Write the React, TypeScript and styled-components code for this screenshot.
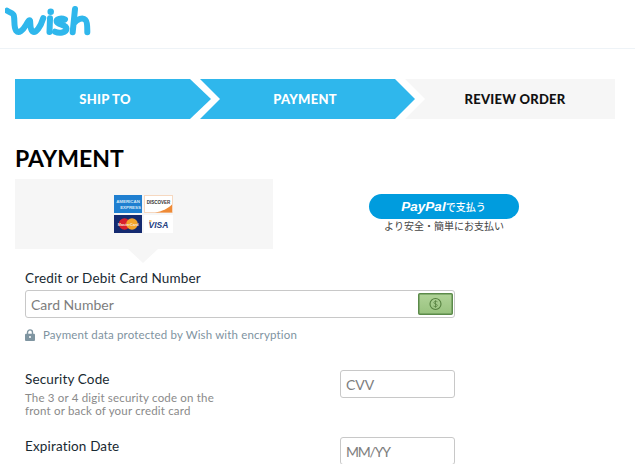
import React from "react";
import styled, { createGlobalStyle } from "styled-components";

const Global = createGlobalStyle`
  html, body { margin: 0; padding: 0; background: #fff; }
  body { font-family: Lato, "Liberation Sans", sans-serif; color: #192a32; }
  * { box-sizing: border-box; }
`;

const Page = styled.div`
  width: 635px;
  height: 464px;
  overflow: hidden;
`;

const Header = styled.header`
  height: 49px;
  border-bottom: 1px solid #eef3f7;
  padding: 6px 0 0 5px;
`;

const Main = styled.main`
  padding: 30px 20px 0 15px;
`;

const Stepper = styled.div`
  display: flex;
  height: 40px;
`;

const Step = styled.div<{ $kind: "first" | "middle" | "last"; $active: boolean }>`
  display: flex;
  align-items: center;
  justify-content: center;
  height: 40px;
  font-size: 13px;
  font-weight: 900;
  letter-spacing: 0.25px;
  background: ${(p) => (p.$active ? "#2fb7ec" : "#f6f6f6")};
  color: ${(p) => (p.$active ? "#fff" : "#111")};
  ${(p) =>
    p.$kind === "first" &&
    `width: 196px; padding-right: 16px; clip-path: polygon(0 0, 175px 0, 196px 20px, 175px 40px, 0 40px);`}
  ${(p) =>
    p.$kind === "middle" &&
    `width: 215px; margin-left: -11px; padding-right: 5px; clip-path: polygon(0 0, 195px 0, 215px 20px, 195px 40px, 0 40px, 20px 20px);`}
  ${(p) =>
    p.$kind === "last" &&
    `width: 210px; margin-left: -10px; padding-left: 10px; clip-path: polygon(0 0, 210px 0, 210px 40px, 0 40px, 20px 20px);`}
`;

const Title = styled.h1`
  margin: 26px 0 0;
  font-size: 23px;
  line-height: 26px;
  font-weight: 700;
  color: #000;
`;

const Tabs = styled.div`
  display: flex;
  margin-top: 8px;
  height: 70px;
`;

const CardTab = styled.div`
  position: relative;
  width: 258px;
  background: #f6f6f6;
  display: flex;
  justify-content: center;
  padding: 16px 1px 0 0;
  &::after {
    content: "";
    position: absolute;
    left: 113px;
    top: 70px;
    border-left: 15px solid transparent;
    border-right: 15px solid transparent;
    border-top: 14px solid #f6f6f6;
  }
`;

const CardGrid = styled.div`
  display: grid;
  grid-template-columns: 28px 29px;
  grid-auto-rows: 18px;
  gap: 2px;
`;

const PayTab = styled.div`
  width: 342px;
  display: flex;
  flex-direction: column;
  align-items: center;
  padding-top: 15px;
`;

const PayPalButton = styled.button`
  width: 150px;
  height: 25px;
  border: 0;
  padding: 0 1px 0 0;
  border-radius: 13px;
  background: #009cde;
  color: #fff;
  display: flex;
  align-items: center;
  justify-content: center;
  font-family: "Noto Sans CJK JP", sans-serif;
  font-size: 10px;
  font-weight: 500;
`;

const PayPalWord = styled.span`
  font-family: "Liberation Sans", sans-serif;
  font-style: italic;
  font-weight: 700;
  font-size: 13.5px;
`;

const PayCaption = styled.div`
  font-family: "Noto Sans CJK JP", sans-serif;
  font-size: 10px;
  line-height: 14px;
  color: #444;
`;

const Form = styled.form`
  padding: 20px 0 0 10px;
  width: 440px;
`;

const Label = styled.div`
  font-size: 13.5px;
  line-height: 18px;
  letter-spacing: 0.15px;
  color: #192a32;
`;

const InputWrap = styled.div`
  position: relative;
  margin-top: 3px;
`;

const TextInput = styled.input<{ $width: number; $tight?: boolean }>`
  display: block;
  width: ${(p) => p.$width}px;
  height: 28px;
  border: 1px solid #c8c8c8;
  border-radius: 3px;
  padding: 0 5px;
  background: #fff;
  font-family: Lato, sans-serif;
  font-size: 14px;
  letter-spacing: ${(p) => (p.$tight ? "-1.2px" : "0")};
  &::placeholder { color: #7d7d7d; opacity: 1; }
`;

const CashBadge = styled.div`
  position: absolute;
  right: 2px;
  top: 3px;
  width: 35px;
  height: 22px;
`;

const Secure = styled.div`
  display: flex;
  align-items: center;
  gap: 8px;
  margin-top: 9px;
  font-size: 11.5px;
  line-height: 16px;
  letter-spacing: 0.15px;
  color: #80939f;
`;

const FieldRow = styled.div<{ $top: number }>`
  display: flex;
  justify-content: space-between;
  align-items: flex-start;
  margin-top: ${(p) => p.$top}px;
`;

const Help = styled.div`
  margin-top: 3px;
  font-size: 11.5px;
  line-height: 13px;
  letter-spacing: 0.18px;
  color: #8a8a8a;
`;

const FieldText = styled.div``;

const Logo = () => (
  <svg width="90" height="32" viewBox="0 0 90 32" fill="none" stroke="#2fb7ec" strokeWidth="6" strokeLinecap="round" strokeLinejoin="round">
    <path d="M2 4.700 C5 7 8 6.500 8.800 9.500 C10 14 8.500 21 11 24.500 C14 28 18 24 21 19 C23 15.500 24.500 13.500 25 14.500 C25.500 18 25 23.500 27.500 25.500 C31 27.500 35.500 21 38.300 12" />
    <path d="M45 12.300 L44.500 26" />
    <path d="M45.700 5.700 L45.700 5.800" strokeWidth="6.500" />
    <path d="M60 13.500 C56 11.500 51 13 51.700 15.700 C52.500 19 61.500 18.500 61.500 22.500 C61.500 27 54 27.500 50 25.700" />
    <path d="M70 3 L67.700 26.300 M69 17.300 C72 13 78 11 80.500 14 C82.500 16 82.300 21 82.300 26.300" />
  </svg>
);

const Amex = () => (
  <svg width="28" height="18" viewBox="0 0 28 18">
    <rect width="28" height="18" fill="#1f7fd0" />
    <text x="14" y="7.500" textAnchor="middle" fontFamily="Liberation Sans" fontSize="4.400" fontWeight="700" fill="#d5e8f7">AMERICAN</text>
    <text x="16.500" y="14" textAnchor="middle" fontFamily="Liberation Sans" fontSize="4.400" fontWeight="700" fill="#d5e8f7">EXPRESS</text>
  </svg>
);

const Discover = () => (
  <svg width="29" height="18" viewBox="0 0 29 18">
    <rect x=".5" y=".5" width="28" height="17" fill="#fff" stroke="#f6d8c0" />
    <path d="M28 9.500v8H11c7-1 13-4 17-8z" fill="#ee8a36" />
    <text x="14.500" y="9" textAnchor="middle" fontFamily="Liberation Sans" fontSize="4.500" fontWeight="700" fill="#333">DISCOVER</text>
  </svg>
);

const MasterCard = () => (
  <svg width="28" height="18" viewBox="0 0 28 18">
    <rect width="28" height="18" fill="#142a70" />
    <circle cx="10.500" cy="9" r="5.800" fill="#d8202c" />
    <circle cx="18" cy="9" r="5.800" fill="#f4a42a" />
    <text x="14.200" y="10.500" textAnchor="middle" fontFamily="Liberation Sans" fontSize="3.800" fontWeight="700" fill="#f6e6dc">MasterCard</text>
  </svg>
);

const Visa = () => (
  <svg width="29" height="18" viewBox="0 0 29 18">
    <rect width="29" height="18" fill="#fff" />
    <text x="14.500" y="12.500" textAnchor="middle" fontFamily="Liberation Sans" fontSize="8.500" fontWeight="700" fontStyle="italic" fill="#24407f">VISA</text>
    <path d="M5 6h2.500" stroke="#e8a33a" strokeWidth="1.200" />
  </svg>
);

const Cash = () => (
  <svg width="35" height="22" viewBox="0 0 35 22">
    <defs>
      <linearGradient id="cashFill" x1="0" y1="0" x2="0" y2="1">
        <stop offset="0" stopColor="#b0d398" />
        <stop offset="1" stopColor="#98c27e" />
      </linearGradient>
    </defs>
    <rect x=".75" y=".75" width="33.500" height="20.500" rx="1" fill="url(#cashFill)" stroke="#5b8a4a" strokeWidth="1.500" />
    <circle cx="17.500" cy="11" r="5.500" fill="none" stroke="#55803f" strokeWidth="1.100" />
    <path d="M19.500 8.800c-1-.8-3.600-.8-3.600.8 0 1.800 3.400 1 3.400 2.800 0 1.500-2.800 1.500-3.800.6M17.500 7.300v7.400" fill="none" stroke="#55803f" strokeWidth=".8" />
  </svg>
);

const Lock = () => (
  <svg width="10" height="12" viewBox="0 0 10 12">
    <path d="M2.500 5V3.400a2.500 2.500 0 0 1 5 0V5" fill="none" stroke="#7f95a1" strokeWidth="1.400" />
    <rect y="4.800" width="10" height="7.200" rx="1" fill="#7f95a1" />
    <circle cx="5" cy="8" r="1" fill="#fff" />
  </svg>
);

export default function App() {
  return (
    <Page>
      <Global />
      <Header>
        <Logo />
      </Header>
      <Main>
        <Stepper>
          <Step $kind="first" $active>SHIP TO</Step>
          <Step $kind="middle" $active>PAYMENT</Step>
          <Step $kind="last" $active={false}>REVIEW ORDER</Step>
        </Stepper>
        <Title>PAYMENT</Title>
        <Tabs>
          <CardTab>
            <CardGrid>
              <Amex />
              <Discover />
              <MasterCard />
              <Visa />
            </CardGrid>
          </CardTab>
          <PayTab>
            <PayPalButton type="button">
              <PayPalWord>PayPal</PayPalWord>で支払う
            </PayPalButton>
            <PayCaption>より安全・簡単にお支払い</PayCaption>
          </PayTab>
        </Tabs>
        <Form>
          <Label>Credit or Debit Card Number</Label>
          <InputWrap>
            <TextInput $width={430} placeholder="Card Number" />
            <CashBadge><Cash /></CashBadge>
          </InputWrap>
          <Secure>
            <Lock />
            Payment data protected by Wish with encryption
          </Secure>
          <FieldRow $top={27}>
            <FieldText>
              <Label>Security Code</Label>
              <Help>The 3 or 4 digit security code on the<br />front or back of your credit card</Help>
            </FieldText>
            <TextInput $width={115} placeholder="CVV" />
          </FieldRow>
          <FieldRow $top={20}>
            <FieldText>
              <Label>Expiration Date</Label>
            </FieldText>
            <TextInput $width={115} $tight placeholder="MM/YY" />
          </FieldRow>
        </Form>
      </Main>
    </Page>
  );
}
